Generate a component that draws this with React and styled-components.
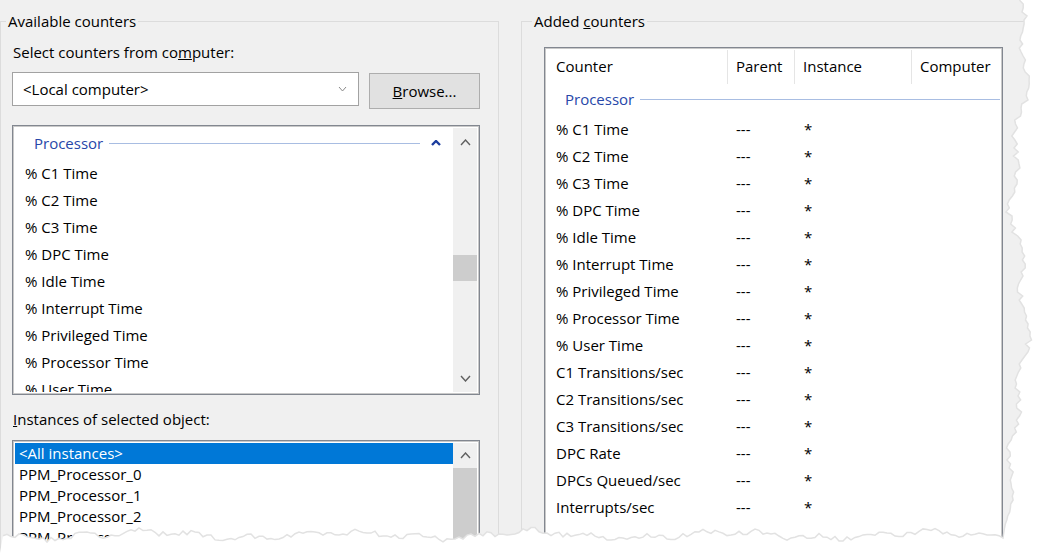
import React from 'react';
import styled, { createGlobalStyle } from 'styled-components';

const GlobalStyle = createGlobalStyle`
    html, body {
        margin: 0;
        padding: 0;
        background: #fff;
    }
    body {
        font-family: "Open Sans", "Noto Sans", "Liberation Sans", sans-serif;
        font-size: 15px;
        color: #000;
    }
`;

const counters = [
    '% C1 Time', '% C2 Time', '% C3 Time', '% DPC Time', '% Idle Time',
    '% Interrupt Time', '% Privileged Time', '% Processor Time', '% User Time',
];
const added = [
    ...counters,
    'C1 Transitions/sec', 'C2 Transitions/sec', 'C3 Transitions/sec',
    'DPC Rate', 'DPCs Queued/sec', 'Interrupts/sec',
];
const instances = ['<All instances>', 'PPM_Processor_0', 'PPM_Processor_1', 'PPM_Processor_2', 'PPM_Processor_3'];

// jagged "torn paper" outline along the right and bottom edges
const torn = (() => {
    let s = 11;
    const rand = () => {
        s = (s * 16807) % 2147483647;
        return s / 2147483647 - 0.5;
    };
    const pts = [];
    for (let y = 0; y <= 530; y += 4) {
        const fade = y > 470 ? (y - 470) / 60 : 0;
        const x = 1019 + 7 * Math.sin(y / 41) + 4 * Math.sin(y / 13 + 1) + rand() * 6;
        pts.push([x * (1 - fade) + 1004 * fade, y]);
    }
    for (let x = 1003; x >= 0; x -= 4) {
        const y = 535 + 3 * Math.sin(x / 31) + 2 * Math.sin(x / 9 + 2) + rand() * 5;
        pts.push([x, y]);
    }
    const edge = pts.map(([x, y], i) => `${i ? 'L' : 'M'}${x.toFixed(1)} ${y.toFixed(1)}`).join(' ');
    return { edge, fill: `M1038 0 L${edge.slice(1)} L0 553 L1038 553 Z` };
})();

const Page = styled.div`
    position: relative;
    width: 1038px;
    height: 553px;
    overflow: hidden;
    background: #f0f0f0;
    display: flex;
    align-items: flex-start;
`;

const Group = styled.fieldset`
    box-sizing: border-box;
    flex: none;
    min-width: 0;
    width: ${p => p.$width}px;
    height: 600px;
    margin: 11px 0 0 ${p => p.$left}px;
    padding: 0;
    border: 1px solid #dcdcdc;
`;

const Legend = styled.legend`
    margin-left: ${p => p.$indent}px;
    padding: 0 2px;
    line-height: 20px;
    height: 20px;
`;

const GroupBody = styled.div`
    display: flex;
    flex-direction: column;
    padding: ${p => p.$pad};
`;

const FieldLabel = styled.div`
    line-height: 20px;
    padding-left: 1px;
    margin: ${p => p.$margin};
    white-space: nowrap;
`;

const PickerRow = styled.div`
    display: flex;
    align-items: flex-start;
    gap: 10px;
    margin-top: 9px;
`;

const Combo = styled.div`
    box-sizing: border-box;
    width: 347px;
    height: 34px;
    display: flex;
    align-items: center;
    justify-content: space-between;
    padding: 0 11px 1px 10px;
    background: #fff;
    border: 1px solid #a2a2a2;
`;

const Button = styled.div`
    box-sizing: border-box;
    width: 111px;
    height: 36px;
    margin-top: 1px;
    padding-bottom: 1px;
    display: flex;
    align-items: center;
    justify-content: center;
    background: #e1e1e1;
    border: 1px solid #adadad;
`;

const ListBox = styled.div`
    box-sizing: border-box;
    display: flex;
    width: ${p => p.$width}px;
    height: ${p => p.$height}px;
    margin-top: ${p => p.$top}px;
    padding: 2px;
    background: #fff;
    border: 1px solid #828790;
    box-shadow: inset 0 0 0 1px #c9c9c9;
    overflow: hidden;
`;

const ListContent = styled.div`
    flex: 1;
    min-width: 0;
    overflow: hidden;
`;

const GroupHeader = styled.div`
    display: flex;
    align-items: center;
    height: 32px;
    padding: 0 ${p => p.$right}px 2px ${p => p.$left}px;
    box-sizing: border-box;
`;

const GroupTitle = styled.span`
    color: #2747a9;
    white-space: nowrap;
`;

const GroupRule = styled.div`
    flex: 1;
    height: 1px;
    margin: 1px ${p => p.$gap}px 0 6px;
    background: #a8bde2;
`;

const ItemRow = styled.div`
    height: ${p => p.$h}px;
    line-height: ${p => p.$h}px;
    padding-left: ${p => p.$pad}px;
    white-space: nowrap;
    background: ${p => (p.$selected ? '#0078d7' : 'transparent')};
    color: ${p => (p.$selected ? '#fff' : '#000')};
`;

const ScrollBar = styled.div`
    flex: none;
    width: 24px;
    display: flex;
    flex-direction: column;
    background: #f0f0f0;
`;

const ScrollButton = styled.div`
    height: ${p => p.$h}px;
    display: flex;
    align-items: center;
    justify-content: center;
`;

const ScrollTrack = styled.div`
    flex: 1;
    display: flex;
    flex-direction: column;
`;

const ScrollThumb = styled.div`
    margin-top: ${p => p.$offset}px;
    height: ${p => (p.$size ? `${p.$size}px` : 'auto')};
    flex: ${p => (p.$size ? 'none' : '1')};
    background: #cdcdcd;
`;

const TableBox = styled(ListBox)`
    flex-direction: column;
`;

const TableHead = styled.div`
    display: grid;
    grid-template-columns: 180px 67px 117px 1fr;
    height: 34px;
    flex: none;
`;

const HeadCell = styled.div`
    display: flex;
    align-items: center;
    padding: 0 0 3px ${p => (p.$first ? 9 : 8)}px;
    border-left: ${p => (p.$first ? 'none' : '1px solid #e5e5e5')};
    white-space: nowrap;
`;

const TableRow = styled.div`
    display: grid;
    grid-template-columns: 180px 67px 117px 1fr;
    flex: none;
    height: 27px;
    line-height: 27px;
`;

const Cell = styled.div`
    padding-left: ${p => p.$pad || 9}px;
    white-space: nowrap;
`;

const TornEdge = styled.svg`
    position: absolute;
    left: 0;
    top: 0;
    pointer-events: none;
`;

const Chevron = ({ dir = 'up', color = '#606060', w = 9, h = 5, stroke = 1.4 }) => (
    <svg width={w + 2} height={h + 2} viewBox={`0 0 ${w + 2} ${h + 2}`}>
        <path
            d={dir === 'up'
                ? `M1 ${h + 1} L${w / 2 + 1} 1 L${w + 1} ${h + 1}`
                : `M1 1 L${w / 2 + 1} ${h + 1} L${w + 1} 1`}
            fill="none"
            stroke={color}
            strokeWidth={stroke}
        />
    </svg>
);

const App = () => (
    <Page>
        <GlobalStyle/>
        <Group $left={0} $width={499}>
            <Legend $indent={5}>Available counters</Legend>
            <GroupBody $pad="12px 18px 0 11px">
                <FieldLabel $margin="-1px 0 1px">Select counters from co<u>m</u>puter:</FieldLabel>
                <PickerRow>
                    <Combo>
                        <span>&lt;Local computer&gt;</span>
                        <Chevron dir="down" color="#8a8a8a" w={7} h={4} stroke={1}/>
                    </Combo>
                    <Button><span><u>B</u>rowse...</span></Button>
                </PickerRow>
                <ListBox $width={468} $height={270} $top={16}>
                    <ListContent>
                        <GroupHeader $left={19} $right={12}>
                            <GroupTitle>Processor</GroupTitle>
                            <GroupRule $gap={11}/>
                            <Chevron color="#1c3d9e" w={8} h={4} stroke={2.4}/>
                        </GroupHeader>
                        {counters.map(c => <ItemRow key={c} $h={27} $pad={10}>{c}</ItemRow>)}
                    </ListContent>
                    <ScrollBar>
                        <ScrollButton $h={28}><Chevron/></ScrollButton>
                        <ScrollTrack><ScrollThumb $offset={99} $size={26}/></ScrollTrack>
                        <ScrollButton $h={28}><Chevron dir="down"/></ScrollButton>
                    </ScrollBar>
                </ListBox>
                <FieldLabel $margin="14px 0 0"><u>I</u>nstances of selected object:</FieldLabel>
                <ListBox $width={468} $height={130} $top={11}>
                    <ListContent>
                        {instances.map((n, i) => (
                            <ItemRow key={n} $h={21} $pad={4} $selected={i === 0}>{n}</ItemRow>
                        ))}
                    </ListContent>
                    <ScrollBar>
                        <ScrollButton $h={24}><Chevron/></ScrollButton>
                        <ScrollTrack><ScrollThumb $offset={1}/></ScrollTrack>
                    </ScrollBar>
                </ListBox>
            </GroupBody>
        </Group>
        <Group $left={22} $width={560}>
            <Legend $indent={10}>Added <u>c</u>ounters</Legend>
            <GroupBody $pad="16px 0 0 22px">
                <TableBox $width={459} $height={520} $top={0}>
                    <TableHead>
                        <HeadCell $first>Counter</HeadCell>
                        <HeadCell>Parent</HeadCell>
                        <HeadCell>Instance</HeadCell>
                        <HeadCell>Computer</HeadCell>
                    </TableHead>
                    <GroupHeader $left={18} $right={0}>
                        <GroupTitle>Processor</GroupTitle>
                        <GroupRule $gap={0}/>
                    </GroupHeader>
                    {added.map(c => (
                        <TableRow key={c}>
                            <Cell>{c}</Cell>
                            <Cell>---</Cell>
                            <Cell $pad={10}>*</Cell>
                            <Cell/>
                        </TableRow>
                    ))}
                </TableBox>
            </GroupBody>
        </Group>
        <TornEdge width="1038" height="553" viewBox="0 0 1038 553">
            <path d={torn.fill} fill="#fff"/>
            <path d={torn.edge} fill="none" stroke="#e2e2e2" strokeWidth="1.5"/>
        </TornEdge>
    </Page>
);

export default App;
